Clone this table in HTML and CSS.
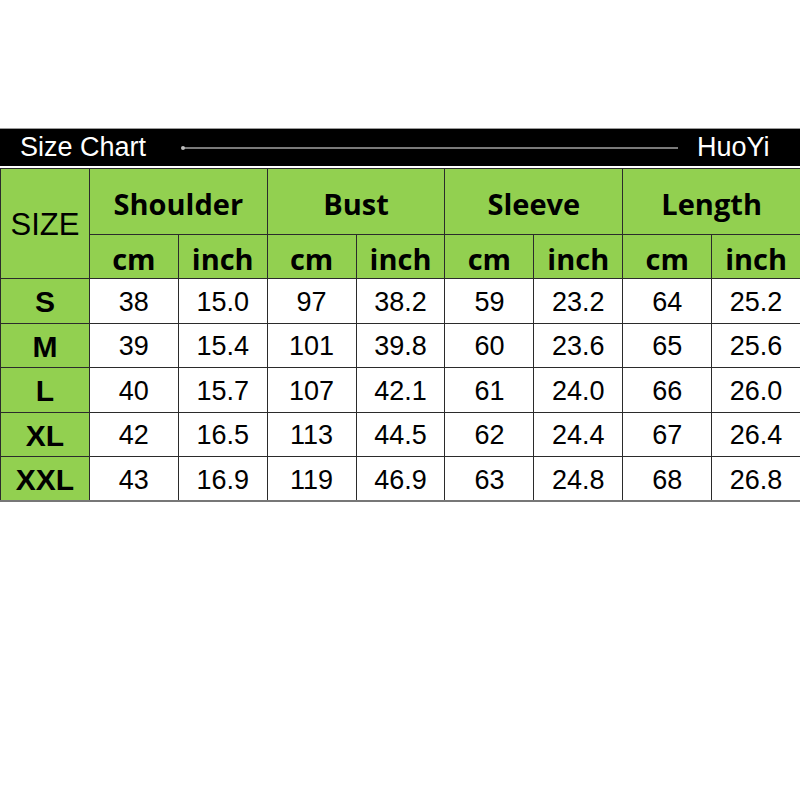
FILE: index.html
```html
<!DOCTYPE html>
<html>
<head>
<meta charset="utf-8">
<link rel="stylesheet" href="styles.css">
</head>
<body>
<div class="page">
  <div class="titlebar">
    <span class="title">Size Chart</span>
    <span class="rule"><span class="dot"></span></span>
    <span class="brand">HuoYi</span>
  </div>
  <table class="chart">
    <colgroup>
      <col class="c"><col class="c"><col class="c"><col class="c"><col class="c"><col class="c"><col class="c"><col class="c"><col class="c">
    </colgroup>
    <thead>
      <tr class="h1">
        <th rowspan="2" class="sizehead">SIZE</th>
        <th colspan="2">Shoulder</th>
        <th colspan="2">Bust</th>
        <th colspan="2">Sleeve</th>
        <th colspan="2">Length</th>
      </tr>
      <tr class="h2">
        <th>cm</th><th>inch</th><th>cm</th><th>inch</th><th>cm</th><th>inch</th><th>cm</th><th>inch</th>
      </tr>
    </thead>
    <tbody>
      <tr><th>S</th><td>38</td><td>15.0</td><td>97</td><td>38.2</td><td>59</td><td>23.2</td><td>64</td><td>25.2</td></tr>
      <tr><th>M</th><td>39</td><td>15.4</td><td>101</td><td>39.8</td><td>60</td><td>23.6</td><td>65</td><td>25.6</td></tr>
      <tr><th>L</th><td>40</td><td>15.7</td><td>107</td><td>42.1</td><td>61</td><td>24.0</td><td>66</td><td>26.0</td></tr>
      <tr><th>XL</th><td>42</td><td>16.5</td><td>113</td><td>44.5</td><td>62</td><td>24.4</td><td>67</td><td>26.4</td></tr>
      <tr><th>XXL</th><td>43</td><td>16.9</td><td>119</td><td>46.9</td><td>63</td><td>24.8</td><td>68</td><td>26.8</td></tr>
    </tbody>
  </table>
</div>
</body>
</html>
```

FILE: styles.css
```css
html, body {
  margin: 0;
  padding: 0;
  background: #ffffff;
}
.page {
  padding-top: 128px;
  width: 800px;
}
.titlebar {
  height: 37px;
  background: #000000;
  border-top: 1px solid #9a9a9a;
  display: flex;
  align-items: center;
  color: #ffffff;
  font-family: "Liberation Sans", Arial, sans-serif;
  font-size: 27px;
  margin-bottom: 2px;
}
.title {
  padding-left: 20px;
  width: 160px;
}
.rule {
  position: relative;
  height: 2px;
  background: #7a7a7a;
  margin-left: 3px;
  width: 495px;
}
.dot {
  position: absolute;
  left: -2px;
  top: -1px;
  width: 4px;
  height: 4px;
  border-radius: 50%;
  background: #bdbdbd;
}
.brand {
  margin-left: 19px;
}
.chart {
  border-collapse: collapse;
  table-layout: fixed;
  width: 800px;
  margin-left: 0;
}
.chart col.c {
  width: 88.9px;
}
.chart th, .chart td {
  border: 1px solid #2b2b2b;
  padding: 0;
  text-align: center;
  vertical-align: middle;
  color: #000;
}
.chart thead th {
  background: #92d050;
  font-family: "Open Sans", "Noto Sans", sans-serif;
  font-weight: 700;
  font-size: 29px;
}
.chart tr.h1 {
  height: 66px;
}
.chart tr.h1 th {
  padding-top: 4px;
}
.chart tr.h2 {
  height: 44px;
}
.chart tr.h2 th {
  padding-top: 4px;
}
.chart thead th.sizehead {
  font-family: "Liberation Sans", Arial, sans-serif;
  font-weight: 400;
  font-size: 31px;
  padding-top: 2px;
}
.chart tbody tr {
  height: 44.5px;
}
.chart tbody th {
  background: #92d050;
  font-family: "Liberation Sans", Arial, sans-serif;
  font-weight: 700;
  font-size: 30px;
  padding-top: 3px;
}
.chart tbody td {
  background: #ffffff;
  font-family: "Liberation Sans", Arial, sans-serif;
  font-size: 27px;
  padding-top: 3px;
}
.chart tbody tr:last-child th,
.chart tbody tr:last-child td {
  border-bottom: 2px solid #777;
}
```
